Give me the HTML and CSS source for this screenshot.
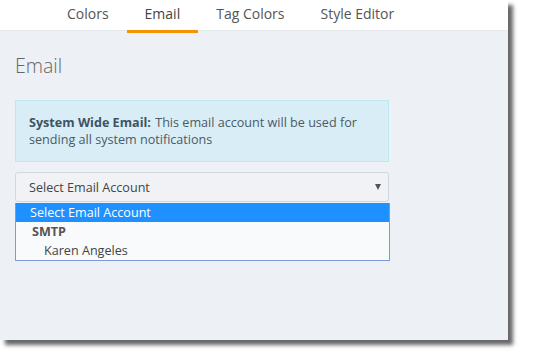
FILE: index.html
```html
<!DOCTYPE html>
<html lang="en">
<head>
  <meta charset="UTF-8" />
  <title>Email Settings</title>
  <link rel="stylesheet" href="styles.css">
</head>
<body>
  <div class="window">
    <div class="tabs">
      <div class="tab">Colors</div>
      <div class="tab active">Email</div>
      <div class="tab">Tag Colors</div>
      <div class="tab">Style Editor</div>
    </div>

    <div class="content">
      <h1>Email</h1>

      <div class="alert">
        <strong>System Wide Email:</strong> This email account will be used for sending all system notifications
      </div>

      <div class="select">
        <span>Select Email Account</span>
        <span class="arrow"></span>
      </div>
      <div class="options">
        <div class="option selected">Select Email Account</div>
        <div class="optgroup">SMTP</div>
        <div class="option child">Karen Angeles</div>
      </div>
    </div>
  </div>
</body>
</html>
```

FILE: styles.css
```css
body {
  margin: 0;
  height: 355px;
  background-color: #fff;
  font-family: "Open Sans", Arial, sans-serif;
}

.window {
  width: 508px;
  height: 340px;
  background-color: #edf0f5;
  box-shadow: 5px 5px 4px rgba(0, 0, 0, 0.6);
}

.tabs {
  display: flex;
  height: 31px;
  padding-left: 49px;
  background-color: #fff;
  border-bottom: 1px solid #e6e9ee;
  box-sizing: border-box;
}

.tab {
  padding: 0 18px;
  font-size: 14px;
  line-height: 27px;
  color: #555;
}

.tab.active {
  color: #444;
  border-bottom: 3px solid #f29500;
  height: 33px;
  box-sizing: border-box;
}

.content {
  padding: 0 15px;
}

h1 {
  margin: 21px 0 21px;
  font-size: 19.5px;
  font-weight: 300;
  line-height: 27px;
  color: #666;
}

.alert {
  width: 374px;
  box-sizing: border-box;
  padding: 13px;
  background-color: #d9edf7;
  border: 1px solid #bce8f1;
  font-size: 12.6px;
  line-height: 17px;
  color: #4a5a66;
}

.alert strong {
  margin-right: 1px;
  color: #3f5360;
}

.select {
  display: flex;
  justify-content: space-between;
  align-items: center;
  width: 374px;
  height: 30px;
  box-sizing: border-box;
  margin-top: 10px;
  padding: 0 7px 0 13px;
  background-color: #f0f2f5;
  border: 1px solid #d3d7de;
  border-radius: 3px;
  font-size: 12.6px;
  color: #444;
}

.arrow {
  width: 0;
  height: 0;
  border-left: 3px solid transparent;
  border-right: 3px solid transparent;
  border-top: 6px solid #555;
}

.options {
  width: 375px;
  box-sizing: border-box;
  margin-top: 1px;
  border: 1px solid #7a9ad8;
  border-top: 0;
  background-color: #f9fafc;
  font-size: 12.6px;
  color: #444;
}

.option, .optgroup {
  height: 19px;
  line-height: 19px;
  padding-left: 14px;
}

.option.selected {
  background-color: #1e90ff;
  color: #fff;
}

.optgroup {
  font-weight: bold;
  padding-left: 16px;
  color: #555;
}

.option.child {
  padding-left: 28px;
}
```
